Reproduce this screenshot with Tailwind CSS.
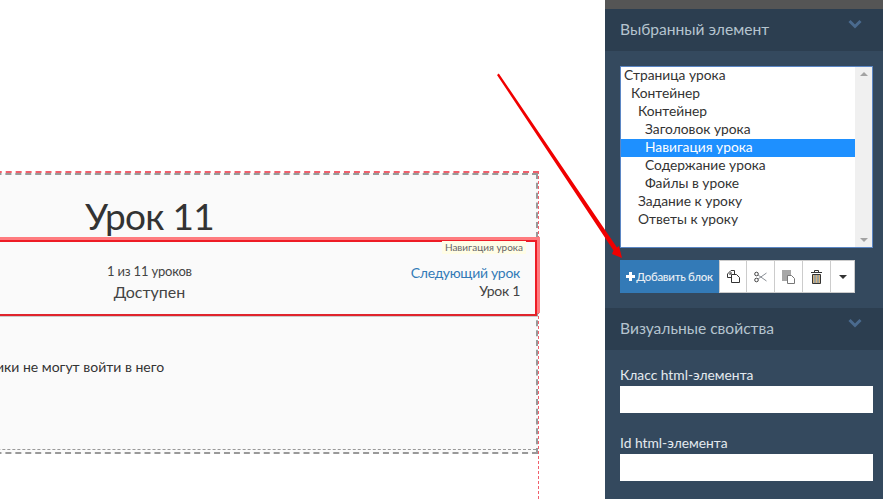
<!DOCTYPE html>
<html lang="ru">
<head>
<meta charset="UTF-8">
<title>Навигация урока</title>
<script src="https://cdn.jsdelivr.net/npm/@tailwindcss/browser@4"></script>
</head>
<body class="h-[499px] w-[883px] overflow-hidden bg-white font-['Lato','Liberation_Sans',sans-serif] text-[#333]">
<div class="relative flex h-[499px] w-[883px] overflow-hidden">
  <!-- canvas with the lesson page -->
  <main class="h-full w-[605px] shrink-0 overflow-hidden pt-[171px]">
    <div class="ml-[-243px] h-[328px] w-[782px] border-t-[2px] border-r-[1px] border-dashed border-[#f0606c]">
      <div class="border-y-[2px] border-r-[2px] border-dashed border-[#999] bg-[#fafafa]">
        <div class="flex h-[65px] items-center justify-center">
          <h1 class="pt-[16px] pl-[6px] text-[37px] leading-none font-normal tracking-[-0.7px] text-[#333]">Урок 11</h1>
        </div>
        <div class="relative mr-[-1px] flex h-[76px] items-center border-[2px] border-[#ee1c25] border-b-[#e0242c] shadow-[3px_-3px_0_0_#ff7b7f]">
          <span class="absolute top-[-1px] right-[9px] bg-[#fffde6] px-[3px] text-[10px] leading-[13px] text-[#666]">Навигация урока</span>
          <div class="w-[240px]"></div>
          <div class="flex-1 pt-[7px] pl-[5px] text-center">
            <div class="text-[13px] leading-[20px] tracking-[-0.2px] text-[#444]">1 из 11 уроков</div>
            <div class="text-[16px] leading-[22px] text-[#444]">Доступен</div>
          </div>
          <div class="w-[240px] pt-[8px] pr-[15px] text-right text-[14px] leading-[18px]">
            <div class="tracking-[-0.3px] text-[#337ab7]">Следующий урок</div>
            <div class="tracking-[-0.3px] text-[#444]">Урок 1</div>
          </div>
        </div>
        <div class="h-[133px] border-t-[1px] border-[#ccc] pt-[40px] pl-[239px] text-[14px] leading-[20px] text-[#333]">ики не могут войти в него</div>
        <div class="h-[3px] border-t-[1px] border-dashed border-[#999]"></div>
      </div>
    </div>
  </main>

  <!-- right sidebar -->
  <aside class="h-full w-[278px] shrink-0 bg-[#34495e]">
    <div class="h-[9px] bg-[#555]"></div>
    <div class="flex h-[42px] items-start justify-between bg-[#2c3e50] pt-[10px] pr-[21px] pl-[15px]">
      <span class="text-[15.6px] leading-[20px] text-[#b5c4cf]">Выбранный элемент</span>
      <svg width="14" height="10" viewBox="0 0 14 10"><path d="M1.500 2 7 7.500 12.500 2" fill="none" stroke="#4a6a8e" stroke-width="3"/></svg>
    </div>
    <div class="px-[15px] pt-[15px]">
      <div class="flex h-[182px] w-[253px] border border-[#5b86c4] bg-white text-[13.8px] text-[#333]">
        <ul class="flex-1 *:h-[18px] *:leading-[16px]">
          <li class="pl-[3px]">Страница урока</li>
          <li class="pl-[10px]">Контейнер</li>
          <li class="pl-[17px]">Контейнер</li>
          <li class="pl-[24px]">Заголовок урока</li>
          <li class="bg-[#1e90ff] pl-[24px] text-white">Навигация урока</li>
          <li class="pl-[24px]">Содержание урока</li>
          <li class="pl-[24px]">Файлы в уроке</li>
          <li class="pl-[17px]">Задание к уроку</li>
          <li class="pl-[17px]">Ответы к уроку</li>
        </ul>
        <div class="flex w-[17px] flex-col items-center justify-between bg-[#f0f0f0] py-[5px]">
          <span class="h-0 w-0 border-x-[4px] border-b-[4px] border-x-transparent border-b-[#a3a3a3]"></span>
          <span class="h-0 w-0 border-x-[4px] border-t-[4px] border-x-transparent border-t-[#a3a3a3]"></span>
        </div>
      </div>
      <div class="mt-[12px] flex h-[33px] w-[235px] text-[11.5px]">
        <button class="flex h-full w-[99px] items-center justify-center gap-px bg-[#337ab7] font-medium tracking-[-0.3px] whitespace-nowrap text-[#e8eef4]">
          <svg width="9" height="9" viewBox="0 0 9 9"><path d="M3 0h3v3h3v3H6v3H3V6H0V3h3z" fill="#fff"/></svg>Добавить блок
        </button>
        <div class="flex h-full w-[28px] items-center justify-center border border-[#ccc] bg-white">
          <svg width="13" height="13" viewBox="0 0 13 13" fill="none" stroke="#333"><path d="M4 .5 .5 4v3.500H4M4 .5h3.500V4M2 4h2V2"/><path d="M4.500 4.500h5l3 3v5h-8z" fill="#fff"/></svg>
        </div>
        <div class="flex h-full w-[28px] items-center justify-center border-y border-r border-[#ccc] bg-white">
          <svg width="13" height="12" viewBox="0 0 13 12" fill="none" stroke="#444"><circle cx="2.500" cy="3" r="1.800"/><circle cx="2.500" cy="9" r="1.800"/><path d="M4 4 12.500 10M4 8 12.500 2" stroke="#8a8f96"/></svg>
        </div>
        <div class="flex h-full w-[28px] items-center justify-center border-y border-r border-[#ccc] bg-white">
          <svg width="13" height="14" viewBox="0 0 13 14"><path d="M0 0h9v11H0z" fill="#a6a6a6"/><path d="M5.500 5.500h4l3 3v5h-7z" fill="#fff" stroke="#777"/></svg>
        </div>
        <div class="flex h-full w-[28px] items-center justify-center border-y border-r border-[#ccc] bg-white">
          <svg width="11" height="14" viewBox="0 0 11 14"><path d="M0 2.500h11M3.500 2V.5h4V2" fill="none" stroke="#333"/><path d="M1.500 4.500h8v9h-8z" fill="#d8b27c" stroke="#333"/><path d="M4 5v8M7 5v8" stroke="#5a8fc0"/></svg>
        </div>
        <div class="flex h-full w-[24px] items-center justify-center border-y border-r border-[#ccc] bg-white">
          <span class="h-0 w-0 border-x-[4px] border-t-[4px] border-x-transparent border-t-[#333]"></span>
        </div>
      </div>
    </div>
    <div class="mt-[15px] flex h-[42px] items-start justify-between bg-[#2c3e50] pt-[10px] pr-[21px] pl-[15px]">
      <span class="text-[15.6px] leading-[20px] text-[#b5c4cf]">Визуальные свойства</span>
      <svg width="14" height="10" viewBox="0 0 14 10"><path d="M1.500 2 7 7.500 12.500 2" fill="none" stroke="#4a6a8e" stroke-width="3"/></svg>
    </div>
    <div class="px-[15px] pt-[15px] text-[13.8px] leading-[20px] text-[#e4eaef]">
      <label class="block">Класс html-элемента</label>
      <input class="mt-[1px] block h-[27px] w-[253px] bg-white">
      <label class="mt-[20px] block">Id html-элемента</label>
      <input class="mt-[1px] block h-[27px] w-[253px] bg-white">
    </div>
  </aside>

  <!-- arrow drawn over the screenshot -->
  <svg class="pointer-events-none absolute top-0 left-0" width="883" height="499" viewBox="0 0 883 499">
    <path d="M497 75 498.800 73.500 617 247.500 619 246 622 258 612 254 613.500 250.500z" fill="#f00000"/>
  </svg>
</div>
</body>
</html>
